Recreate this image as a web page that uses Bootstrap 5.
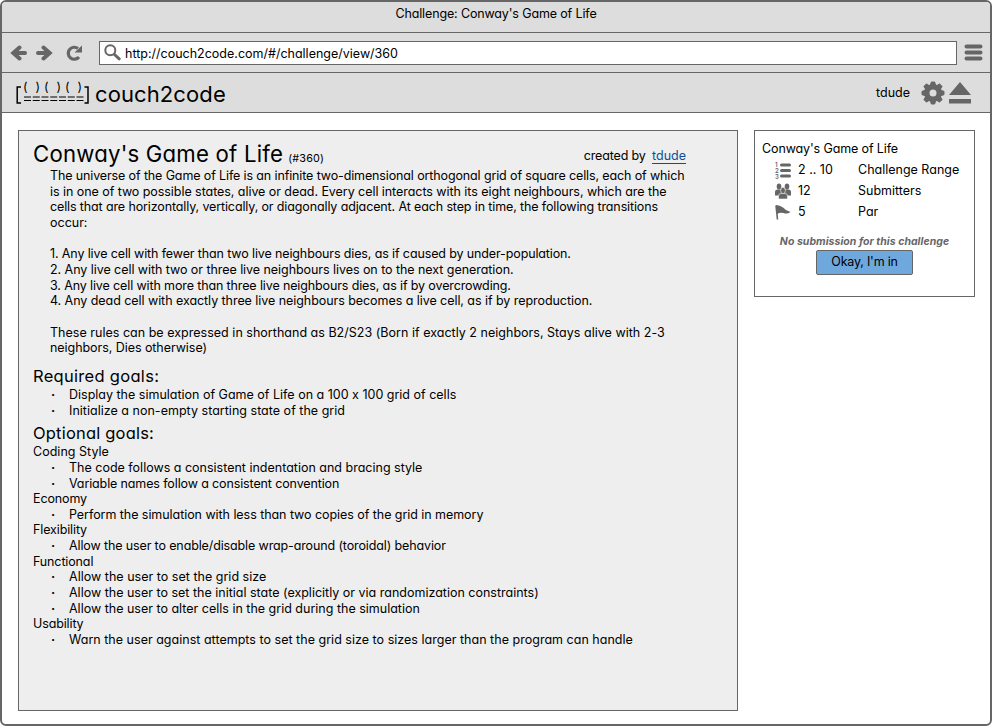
<!DOCTYPE html>
<html lang="en">
<head>
<meta charset="utf-8">
<title>Challenge: Conway's Game of Life</title>
<link href="https://cdn.jsdelivr.net/npm/bootstrap@5.3.0/dist/css/bootstrap.min.css" rel="stylesheet">
<style>
body{font-family:Inter,Lato,sans-serif;font-feature-settings:"cv11","calt" 0;font-size:12.5px;line-height:15.65px;color:#000;background:#fff}
.window{height:726px;border:2px solid #666;border-radius:6px;overflow:hidden}
.bar{background:#ddd;border-bottom:1px solid #666;flex:none}
.titlebar{height:31px;padding-top:4px;letter-spacing:-.14px}
.toolbar{height:40px;padding:0 7px 0 8px}
.brandbar{height:40px;padding:0 19px 0 13px}
.reload{margin-left:13px}
.address{height:24px;margin-left:16px;margin-right:7px;border:1px solid #666;background:#fff;padding-left:4px}
.address span{padding-top:2px}
.logo{font-size:22px;line-height:38px;letter-spacing:.1px;padding-top:2px}
svg{display:block;flex:none}
.gear{margin-left:9px;margin-right:2px}
.content{padding:17px 15px 0 16px;gap:16px}
.panel{border:1px solid #666}
.challenge{width:720px;height:581px;background:#eee;padding:10px 14px}
.side{width:221px;height:167px;padding:10px 7px}
.name{font-size:22.2px;line-height:26px;letter-spacing:.2px}
.num{font-size:10.8px;margin-left:5px}
.by{margin-right:37px;padding-top:7px;letter-spacing:-.15px}
.by a{color:#0b4f98;margin-left:3px;text-decoration:none;border-bottom:1px solid #0b4f98;letter-spacing:0}
.text-line{white-space:pre}
.descr{margin:-4px 0 0 17px}
.tight{letter-spacing:-.125px}
.snug{letter-spacing:-.055px}
.airy{letter-spacing:.02px}
.goal-title{font-size:16.5px;line-height:21px;margin:10px 0 0;letter-spacing:.3px}
.goal-title.optional{margin-top:5px;letter-spacing:.2px}
.goals{list-style:none;margin:0;padding-left:36px}
.goals li{white-space:nowrap}
.goals li::before{content:"·";display:inline-block;width:18px;margin-left:-18px;font-weight:700}
.stats{padding-top:3px}
.stat{height:21px}
.stat svg{margin-left:13px}
.stat .val{width:60px;margin-left:7px}
.none-yet{font-size:10.5px;font-weight:700;font-style:italic;color:#666;margin-top:11px;letter-spacing:.04px}
.btn-in{width:97px;height:25px;padding:0 0 2px;margin-top:1px;font-size:12.5px;line-height:21px;letter-spacing:-.2px;background:#6fa8dc;border:1px solid #666;border-radius:2px;color:#000}
</style>
</head>
<body>
<div class="window d-flex flex-column">
  <div class="bar titlebar text-center">Challenge: Conway's Game of Life</div>
  <div class="bar toolbar d-flex align-items-center">
    <svg width="17" height="16" viewBox="0 0 17 16" fill="none" stroke="#666" stroke-width="4" stroke-linecap="round"><path d="M15 8H4M9.500 2.500 3.300 8l6.200 5.500"/></svg>
    <svg class="ms-2" width="18" height="16" viewBox="0 0 18 16" fill="none" stroke="#666" stroke-width="4" stroke-linecap="round"><path d="M3 8h11M8.500 2.500 14.700 8l-6.200 5.500"/></svg>
    <svg class="reload" width="17" height="16" viewBox="0 0 17 16"><path d="M13 12A6 6 0 1 1 12 3.500" fill="none" stroke="#666" stroke-width="3.200"/><path d="M16 .5v7H8.500z" fill="#666"/></svg>
    <div class="address flex-fill d-flex align-items-center">
      <svg width="17" height="17" viewBox="0 0 17 17" fill="none" stroke="#666"><circle cx="6.300" cy="6.300" r="5" stroke-width="2"/><path d="m10.500 10.500 4.700 4.300" stroke-width="3" stroke-linecap="round"/></svg>
      <span class="ms-1">http://couch2code.com/#/challenge/view/360</span>
    </div>
    <svg width="19" height="17" viewBox="0 0 19 17" stroke="#666" stroke-width="4" stroke-linecap="round"><path d="M2.500 2.500h14M2.500 8.500h14M2.500 14.500h14"/></svg>
  </div>
  <div class="bar brandbar d-flex align-items-center">
    <svg width="76" height="30" viewBox="0 0 76 30" font-family="Inter,sans-serif">
      <path d="M6 9H2.200v16H6M69.500 9H73v16h-3.500" fill="none" stroke="#000" stroke-width="1.500"/>
      <g font-size="12.500"><text x="8" y="13">(</text><text x="20.500" y="13">)</text><text x="29" y="13">(</text><text x="41.500" y="13">)</text><text x="50" y="13">(</text><text x="62.500" y="13">)</text></g>
      <path d="M9 19h59.500M9 22.500h59.500" stroke="#000" stroke-width="1.200" stroke-dasharray="7 1.750"/>
    </svg>
    <span class="logo ms-1">couch2code</span>
    <span class="ms-auto">tdude</span>
    <svg class="gear" width="28" height="24" viewBox="-14 -12 28 24" fill="#666"><path fill-rule="evenodd" d="M-9 0a9 9 0 1 0 18 0a9 9 0 1 0-18 0M-3.500 0a3.500 3.500 0 1 1 7 0a3.500 3.500 0 1 1-7 0"/><path id="tooth" stroke="#666" stroke-linejoin="round" d="M-2.500-8-1.700-11h3.400l.8 3zM-2.500 8-1.700 11h3.400L2.500 8z"/><use href="#tooth" transform="rotate(45)"/><use href="#tooth" transform="rotate(90)"/><use href="#tooth" transform="rotate(135)"/></svg>
    <svg width="22" height="22" viewBox="0 0 22 22" fill="#666"><path d="M11 0 22 13H0zM0 17h22v4.500H0z"/></svg>
  </div>
  <main class="content d-flex align-items-start">
    <section class="panel challenge">
      <header class="d-flex"><h1 class="name m-0 fw-normal">Conway's Game of Life<span class="num">(#360)</span></h1><span class="by ms-auto">created by <a href="#">tdude</a></span></header>
      <div class="descr">
        <div class="text-line tight">The universe of the Game of Life is an infinite two-dimensional orthogonal grid of square cells, each of which</div>
        <div class="text-line snug">is in one of two possible states, alive or dead. Every cell interacts with its eight neighbours, which are the</div>
        <div class="text-line tight">cells that are horizontally, vertically, or diagonally adjacent. At each step in time, the following transitions</div>
        <div class="text-line">occur:</div>
        <br>
        <div class="text-line tight">1. Any live cell with fewer than two live neighbours dies, as if caused by under-population.</div>
        <div class="text-line snug">2. Any live cell with two or three live neighbours lives on to the next generation.</div>
        <div class="text-line tight">3. Any live cell with more than three live neighbours dies, as if by overcrowding.</div>
        <div class="text-line snug">4. Any dead cell with exactly three live neighbours becomes a live cell, as if by reproduction.</div>
        <br>
        <div class="text-line airy">These rules can be expressed in shorthand as B2/S23 (Born if exactly 2 neighbors, Stays alive with 2-3</div>
        <div class="text-line snug">neighbors, Dies otherwise)</div>
      </div>
      <h2 class="goal-title fw-normal">Required goals:</h2>
      <ul class="goals"><li>Display the simulation of Game of Life on a 100 x 100 grid of cells</li><li class="airy">Initialize a non-empty starting state of the grid</li></ul>
      <h2 class="goal-title optional fw-normal">Optional goals:</h2>
      <div class="airy">Coding Style</div>
      <ul class="goals"><li>The code follows a consistent indentation and bracing style</li><li class="tight">Variable names follow a consistent convention</li></ul>
      <div class="tight">Economy</div>
      <ul class="goals"><li class="snug">Perform the simulation with less than two copies of the grid in memory</li></ul>
      <div class="tight">Flexibility</div>
      <ul class="goals"><li class="tight">Allow the user to enable/disable wrap-around (toroidal) behavior</li></ul>
      <div class="tight">Functional</div>
      <ul class="goals"><li class="airy">Allow the user to set the grid size</li><li>Allow the user to set the initial state (explicitly or via randomization constraints)</li><li>Allow the user to alter cells in the grid during the simulation</li></ul>
      <div class="tight">Usability</div>
      <ul class="goals"><li class="airy">Warn the user against attempts to set the grid size to sizes larger than the program can handle</li></ul>
    </section>
    <aside class="panel side">
      <div class="tight">Conway's Game of Life</div>
      <div class="stats">
      <div class="stat d-flex align-items-center"><svg width="16" height="17" viewBox="0 0 16 17"><g fill="#666" font-family="Inter,sans-serif" font-size="6" font-weight="600"><text x="0" y="4.500">1</text><text x="0" y="10.500">2</text><text x="0" y="16.500">3</text></g><path d="M6.500 3h8M6.500 8.500h8M6.500 14h8" stroke="#666" stroke-width="3" stroke-linecap="round"/></svg><span class="val">2 .. 10</span><span>Challenge Range</span></div>
      <div class="stat d-flex align-items-center"><svg width="16" height="16" viewBox="0 0 16 16" fill="#666"><ellipse cx="4" cy="3.500" rx="2.300" ry="3"/><ellipse cx="12" cy="3.500" rx="2.300" ry="3"/><path d="M0 12.500V9q0-2.500 2.500-2.500h11Q16 6.500 16 9v3.500z"/><g stroke="#fff" stroke-width=".6"><path d="M3.500 16v-3q0-2.500 2.500-2.500h4q2.500 0 2.500 2.500v3z"/><ellipse cx="8" cy="7.500" rx="2.400" ry="3.200"/></g></svg><span class="val">12</span><span>Submitters</span></div>
      <div class="stat d-flex align-items-center"><svg width="16" height="16" viewBox="0 0 16 16" fill="#666"><path d="M1 1.500 2.500 15.500" stroke="#666" stroke-width="1.600"/><path d="M1 1Q5 1 8 3.500 10.500 6.500 15.500 8 12 10.500 8.500 9 5.500 8 2 10z"/></svg><span class="val">5</span><span>Par</span></div>
      </div>
      <div class="none-yet text-center">No submission for this challenge</div>
      <div class="text-center"><button type="button" class="btn btn-in">Okay, I'm in</button></div>
    </aside>
  </main>
</div>
<script src="https://cdn.jsdelivr.net/npm/bootstrap@5.3.0/dist/js/bootstrap.bundle.min.js"></script>
</body>
</html>
